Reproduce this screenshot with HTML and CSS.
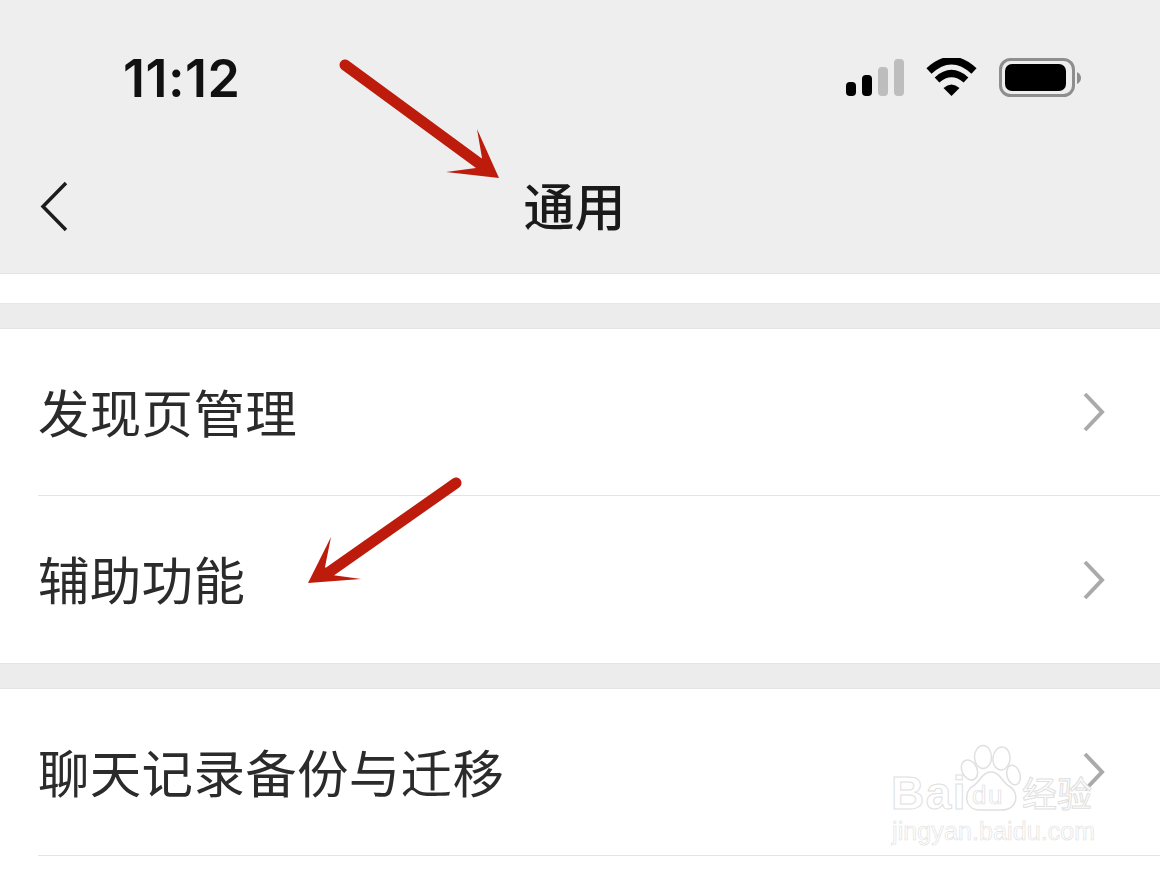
FILE: index.html
```html
<!DOCTYPE html>
<html lang="zh-CN">
<head>
<meta charset="utf-8">
<title>通用</title>
<link rel="stylesheet" href="styles.css">
</head>
<body>
<div class="screen">
  <header class="header">
    <div class="status">
      <span class="time">11:12</span>
      <svg class="status-icons" width="236" height="40" viewBox="846 58 236 40">
        <rect x="846" y="82" width="10" height="14" rx="4" fill="#000"/>
        <rect x="862" y="75" width="10" height="21" rx="4" fill="#000"/>
        <rect x="878" y="67" width="10" height="29" rx="4" fill="#bdbdbd"/>
        <rect x="894" y="59" width="10" height="37" rx="4" fill="#bdbdbd"/>
        <path d="M929 71 Q951.500 50 974 71" fill="none" stroke="#000" stroke-width="7.500"/>
        <path d="M937 80 Q951.500 67 966 80" fill="none" stroke="#000" stroke-width="7"/>
        <path d="M943.500 88 Q951.500 81 959.500 88 L951.500 96 Z" fill="#000"/>
        <rect x="1000.500" y="59.500" width="73" height="36" rx="10" fill="none" stroke="#8e8e8e" stroke-width="3"/>
        <rect x="1005" y="64" width="61" height="27" rx="7" fill="#000"/>
        <path d="M1077 72 Q1081 74 1081 78 Q1081 82 1077 84 Z" fill="#8e8e8e"/>
      </svg>
    </div>
    <div class="nav">
      <svg class="back" width="30" height="52" viewBox="0 0 30 52"><path d="M27 2 L4 25.500 L27 49" fill="none" stroke="#1c1c1c" stroke-width="3.500"/></svg>
      <h1 class="title">通用</h1>
    </div>
  </header>
  <div class="strip"></div>
  <div class="gap"></div>
  <section class="group">
    <div class="row row-first">
      <span class="label">发现页管理</span>
      <svg class="chev" width="24" height="42" viewBox="0 0 24 42"><path d="M3 3 L20 21 L3 39" fill="none" stroke="#aaa" stroke-width="4"/></svg>
    </div>
    <div class="row row-last">
      <span class="label">辅助功能</span>
      <svg class="chev" width="24" height="42" viewBox="0 0 24 42"><path d="M3 3 L20 21 L3 39" fill="none" stroke="#aaa" stroke-width="4"/></svg>
    </div>
  </section>
  <div class="gap"></div>
  <section class="group group-open">
    <div class="row row-first">
      <span class="label">聊天记录备份与迁移</span>
      <svg class="chev" width="24" height="42" viewBox="0 0 24 42"><path d="M3 3 L20 21 L3 39" fill="none" stroke="#aaa" stroke-width="4"/></svg>
    </div>
  </section>

  <svg class="arrows" width="1160" height="870" viewBox="0 0 1160 870">
    <path d="M345 65 L484 167" stroke="#bd1c0c" stroke-width="11" stroke-linecap="round" fill="none"/>
    <path d="M477 129 L499 178 L446 172 L476 168 L482 158 Z" fill="#bd1c0c"/>
    <path d="M456 483 L325 575" stroke="#bd1c0c" stroke-width="11" stroke-linecap="round" fill="none"/>
    <path d="M331 537 L308 583 L361 579 L332 575 L325 567 Z" fill="#bd1c0c"/>
  </svg>

  <div class="mark">
    <svg class="paw" width="66" height="70" viewBox="0 0 66 70">
      <g fill="#fff" stroke="#e0e0e0" stroke-width="1.500">
        <ellipse cx="11.500" cy="26" rx="7.500" ry="10.500" transform="rotate(-25 11.500 26)"/>
        <ellipse cx="25" cy="13" rx="8.500" ry="11.500"/>
        <ellipse cx="43.500" cy="14.500" rx="8.500" ry="11.500" transform="rotate(5 43.500 14.500)"/>
        <ellipse cx="55.500" cy="31" rx="6.500" ry="10" transform="rotate(-15 55.500 31)"/>
        <path d="M33 28 C24 28 22 38 15 42 C6 46 5 66 22 66 L44 66 C60 66 62 48 51 42 C44 38 42 28 33 28 Z"/>
      </g>
    </svg>
    <span class="mark-du">du</span>
    <span class="mark-bai">Bai</span>
    <span class="mark-cn">经验</span>
    <span class="mark-url">jingyan.baidu.com</span>
  </div>
</div>
</body>
</html>
```
FILE: styles.css
```css
* { box-sizing: border-box; }
html, body { margin: 0; padding: 0; background: #fff; }
body { overflow: hidden; }
.screen {
  position: relative;
  width: 1160px;
  height: 870px;
  overflow: hidden;
  background: #fff;
  font-family: "Noto Sans CJK SC", "Noto Sans", sans-serif;
  color: #232323;
}
.header {
  height: 274px;
  background: #eeeeee;
  border-bottom: 1px solid #e2e2e2;
  display: flex;
  flex-direction: column;
}
.status {
  height: 155px;
  display: flex;
  justify-content: space-between;
  align-items: flex-start;
  padding: 46px 78px 0 123px;
}
.time {
  font-family: Inter, "Liberation Sans", sans-serif;
  font-weight: 600;
  font-size: 52px;
  line-height: 62px;
  letter-spacing: 0.500px;
  color: #111;
  margin-top: 2px;
}
.status-icons { margin-top: 12px; display: block; }
.nav {
  display: grid;
  grid-template-columns: 1fr auto 1fr;
  align-items: center;
  padding: 0 50px 0 39px;
  height: 106px;
}
.back { display: block; margin-top: -2px; }
.title {
  margin: -8px 0 0;
  font-size: 51px;
  line-height: 106px;
  font-weight: 500;
  color: #1a1a1a;
}
.strip {
  height: 30px;
  background: #fff;
  border-bottom: 1px solid #e6e6e6;
}
.gap {
  height: 25px;
  background: #ececec;
  border-bottom: 1px solid #e4e4e4;
}
.group { background: #fff; margin-left: 38px; }
.row {
  display: flex;
  align-items: center;
  justify-content: space-between;
  padding: 0 54px 0 0;
}
.row-first { height: 167px; border-bottom: 1px solid #e4e4e4; }
.row-last { height: 167px; }
.group + .gap { border-top: 1px solid #e4e4e4; height: 26px; }
.label {
  font-size: 51.500px;
  line-height: 70px;
  letter-spacing: 0.300px;
  font-weight: 400;
  color: #2b2b2b;
  margin-top: -3px;
}
.chev { display: block; }
.arrows { position: absolute; left: 0; top: 0; pointer-events: none; }
.mark {
  position: absolute;
  left: 888px;
  top: 744px;
  width: 215px;
  height: 105px;
  pointer-events: none;
}
.paw { position: absolute; left: 70px; top: 0; }
.mark-bai, .mark-du, .mark-cn, .mark-url {
  position: absolute;
  font-family: "Liberation Sans", "Noto Sans CJK SC", sans-serif;
  color: #fff;
  -webkit-text-stroke: 1px #e0e0e0;
  white-space: nowrap;
}
.mark-bai { left: 3px; top: 26px; font-size: 46px; line-height: 46px; font-weight: 700; letter-spacing: 1.500px; }
.mark-du { left: 84px; top: 38px; font-size: 26px; line-height: 26px; letter-spacing: 1.500px; -webkit-text-stroke-width: 0.700px; }
.mark-cn { left: 134px; top: 27px; font-size: 35px; line-height: 42px; font-family: "Noto Sans CJK SC", sans-serif; }
.mark-url { left: 4px; top: 73px; font-size: 25px; line-height: 28px; letter-spacing: 0.100px; -webkit-text-stroke-width: 0.600px; }
```
